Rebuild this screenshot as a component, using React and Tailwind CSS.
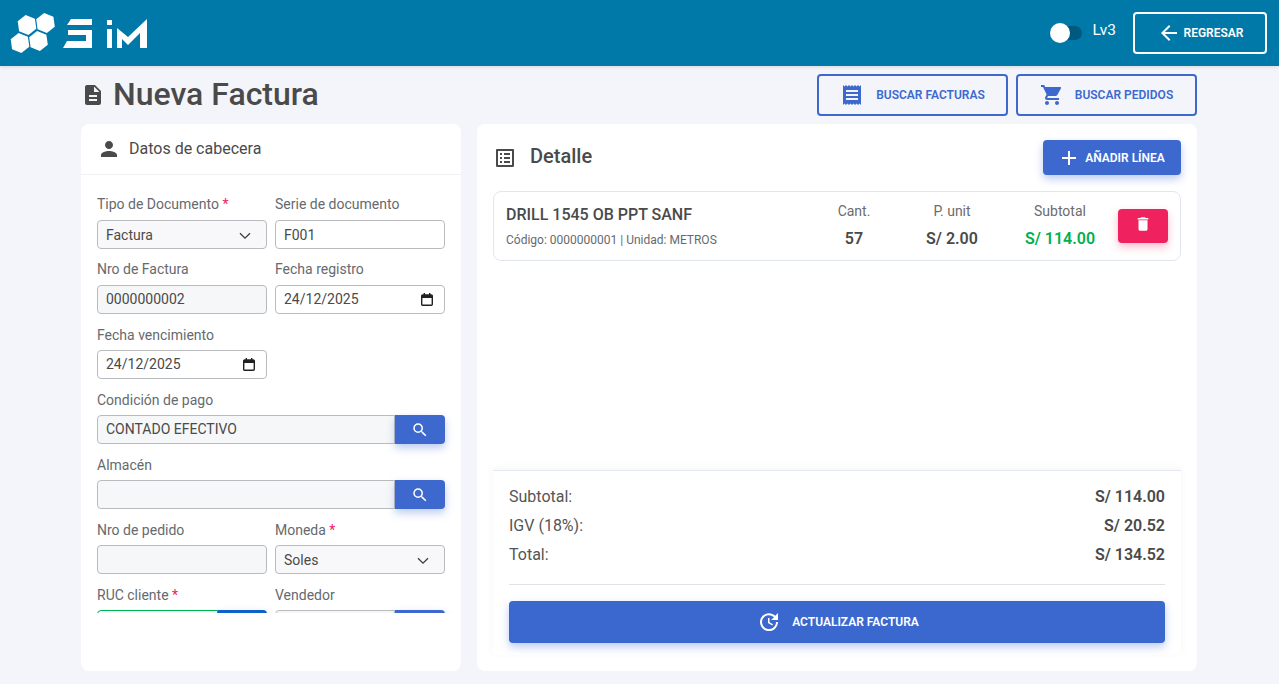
import React from 'react';
import {
  MdAdd,
  MdArrowBack,
  MdDelete,
  MdDescription,
  MdListAlt,
  MdPerson,
  MdReceipt,
  MdSearch,
  MdShoppingCart,
  MdUpdate,
} from 'react-icons/md';

const hexes = [
  [27, 25],
  [45.5, 23],
  [20, 43],
  [38.5, 41],
];

function hexPoints([cx, cy]) {
  return [0, 1, 2, 3, 4, 5]
    .map((i) => {
      const a = ((i * 60 - 8 - 90) * Math.PI) / 180;
      return `${(cx + 10 * Math.cos(a)).toFixed(1)},${(cy + 10 * Math.sin(a)).toFixed(1)}`;
    })
    .join(' ');
}

function Logo() {
  return (
    <svg width="160" height="66" viewBox="0 0 160 66" fill="#fff" aria-label="SIM">
      {hexes.map((h) => (
        <polygon key={h[0]} points={hexPoints(h)} />
      ))}
      <polygon points="71,19 92,19 92,25 67,25" />
      <polygon points="68,30 92,30 92,48 63,48 67,41 86,41 86,35 68,35" />
      <rect x="107" y="20" width="5" height="5" />
      <rect x="107" y="29" width="5" height="19" />
      <polygon points="117,28 128,37 147,19 147,48 140,48 140,33 128,45 122,39 122,48 117,48" />
    </svg>
  );
}

function Chevron() {
  return (
    <svg width="12" height="8" viewBox="0 0 12 8" fill="none" stroke="#3c3c3c" strokeWidth="1.3" className="shrink-0">
      <polyline points="1,1.2 6,6.2 11,1.2" />
    </svg>
  );
}

function CalendarIcon() {
  return (
    <svg width="12" height="13" viewBox="0 0 12 13" fill="none" className="shrink-0">
      <rect x="0.7" y="2" width="10.6" height="10.3" rx="1" stroke="#222" strokeWidth="1.4" />
      <rect x="0.7" y="2" width="10.6" height="3" fill="#222" />
      <rect x="2.6" y="0" width="1.4" height="2" fill="#222" />
      <rect x="8" y="0" width="1.4" height="2" fill="#222" />
    </svg>
  );
}

function Field({ label, required, labelClass = '', children, className }) {
  return (
    <div className={className}>
      <label className={`block h-5 mb-[6px] text-[14px] leading-5 text-[#666a6e] ${labelClass}`}>
        {label}
        {required && <span className="text-[#f0215f]"> *</span>}
      </label>
      {children}
      <div className="h-[10px]" />
    </div>
  );
}

const inputCls =
  'block w-full h-[29px] px-2 text-[14px] text-[#4a4a4a] border border-[#b9bbbf] rounded-[4px] outline-none';

function TextInput({ value, muted }) {
  return <input readOnly value={value} className={`${inputCls} ${muted ? 'bg-[#f6f7f9] pb-px' : 'bg-white'}`} />;
}

function SelectInput({ value }) {
  return (
    <div className={`${inputCls} bg-[#f8f8fa] flex items-center justify-between pr-[15px] pt-[2px]`}>
      <span>{value}</span>
      <Chevron />
    </div>
  );
}

function DateInput({ value }) {
  return (
    <div className={`${inputCls} bg-white flex items-center justify-between pr-[11px]`}>
      <span>{value}</span>
      <CalendarIcon />
    </div>
  );
}

function SearchInput({ value, inputClass = 'border-[#b9bbbf]', btnClass = 'bg-[#3d69cf]', btnWidth = 'w-[50px]' }) {
  return (
    <div className="flex h-[29px]">
      <div className={`flex-1 min-w-0 flex items-center px-2 text-[14px] text-[#4a4a4a] bg-[#f6f7f9] border rounded-l-[4px] ${inputClass}`}>
        {value}
      </div>
      <button className={`${btnWidth} flex items-center justify-center rounded-r-[4px] text-white shadow-[0_4px_8px_rgba(61,105,207,0.35)] ${btnClass}`}>
        <MdSearch size={18} />
      </button>
    </div>
  );
}

function ActionButton({ icon, gap, className, children }) {
  return (
    <button className={`flex items-center justify-center rounded-[4px] text-[12px] font-semibold ${gap} ${className}`}>
      {icon}
      {children}
    </button>
  );
}

function Summary({ label, value, className }) {
  return (
    <div className={`flex items-center justify-between h-[20px] text-[16px] ${className}`}>
      <span className="text-[#555]">{label}</span>
      <span className="font-semibold text-[#4a4a4a]">{value}</span>
    </div>
  );
}

export default function App() {
  return (
    <div className="h-[684px] overflow-hidden bg-[#f3f5fb] text-[#4a4a4a] font-['Roboto',sans-serif]">
      {/* Top bar */}
      <header className="h-[66px] bg-[#0079a9] flex items-center justify-between pr-3 shadow-[0_1px_4px_rgba(0,0,0,0.12)]">
        <Logo />
        <div className="flex items-center">
          <div className="relative w-8 h-[14px] rounded-full bg-[#005a80]">
            <span className="absolute left-0 -top-[3px] w-5 h-5 rounded-full bg-white" />
          </div>
          <span className="ml-[10px] mr-[17px] -mt-1 text-[15.5px] text-white">Lv3</span>
          <ActionButton
            gap="gap-[3px]"
            className="w-[134px] h-[42px] border-2 border-white text-white"
            icon={<MdArrowBack size={24} />}
          >
            REGRESAR
          </ActionButton>
        </div>
      </header>

      <main className="w-[1116px] ml-[81px]">
        {/* Title row */}
        <div className="flex items-center justify-between h-[42px] mt-2">
          <div className="flex items-center gap-2">
            <MdDescription size={24} />
            <h1 className="text-[32px] font-medium leading-none -mt-[2px]">Nueva Factura</h1>
          </div>
          <div className="flex gap-2">
            <ActionButton
              gap="gap-[12px]"
              className="w-[191px] h-[42px] border-2 border-[#3d69cf] text-[#3d69cf]"
              icon={<MdReceipt size={24} />}
            >
              BUSCAR FACTURAS
            </ActionButton>
            <ActionButton
              gap="gap-[11px]"
              className="w-[181px] h-[42px] border-2 border-[#3d69cf] text-[#3d69cf]"
              icon={<MdShoppingCart size={24} />}
            >
              BUSCAR PEDIDOS
            </ActionButton>
          </div>
        </div>

        <div className="flex gap-4 mt-2 h-[547px]">
          {/* Left card */}
          <section className="w-[380px] bg-white rounded-lg flex flex-col">
            <div className="h-[51px] flex items-center gap-2 px-4 border-b border-[#eef0f4]">
              <MdPerson size={24} />
              <h2 className="text-[16px] font-normal">Datos de cabecera</h2>
            </div>
            <div className="h-[438px] overflow-hidden px-4 pt-[19px]">
              <div className="grid grid-cols-2 gap-x-2">
                <Field label="Tipo de Documento" required>
                  <SelectInput value="Factura" />
                </Field>
                <Field label="Serie de documento">
                  <TextInput value="F001" />
                </Field>
                <Field label="Nro de Factura">
                  <TextInput value="0000000002" muted />
                </Field>
                <Field label="Fecha registro">
                  <DateInput value="24/12/2025" />
                </Field>
                <Field label="Fecha vencimiento" labelClass="pt-px">
                  <DateInput value="24/12/2025" />
                </Field>
                <div />
                <Field label="Condición de pago" labelClass="pt-px" className="col-span-2">
                  <SearchInput value="CONTADO EFECTIVO" />
                </Field>
                <Field label="Almacén" labelClass="pt-px" className="col-span-2">
                  <SearchInput value="" />
                </Field>
                <Field label="Nro de pedido" labelClass="pt-px">
                  <TextInput value="" muted />
                </Field>
                <Field label="Moneda" labelClass="pt-px" required>
                  <SelectInput value="Soles" />
                </Field>
                <Field label="RUC cliente" labelClass="pt-px" required>
                  <div className="mt-px">
                    <SearchInput value="" inputClass="border-[#00b050]" btnClass="bg-[#0d62c9]" btnWidth="w-[49px]" />
                  </div>
                </Field>
                <Field label="Vendedor" labelClass="pt-px">
                  <div className="mt-px">
                    <SearchInput value="" />
                  </div>
                </Field>
              </div>
            </div>
          </section>

          {/* Right card */}
          <section className="flex-1 bg-white rounded-lg flex flex-col px-4 pt-4">
            <div className="flex items-center justify-between h-[35px]">
              <div className="flex items-center gap-[13px]">
                <MdListAlt size={24} />
                <h2 className="text-[20px] font-medium -mt-1">Detalle</h2>
              </div>
              <ActionButton
                gap="gap-[4px]"
                className="w-[138px] h-[35px] pr-[2px] bg-[#3d69cf] text-white shadow-[0_4px_8px_rgba(61,105,207,0.35)]"
                icon={<MdAdd size={24} />}
              >
                AÑADIR LÍNEA
              </ActionButton>
            </div>

            <div className="mt-4 h-[70px] flex items-center border border-[#e2e6f0] rounded-lg pl-3 pr-3">
              <div className="flex-1 -mt-px">
                <div className="text-[16px] font-medium">DRILL 1545 OB PPT SANF</div>
                <div className="mt-[4px] text-[12px] text-[#666a6e]">Código: 0000000001 | Unidad: METROS</div>
              </div>
              <div className="w-[96px] text-center">
                <div className="text-[14px] text-[#6c6c6c]">Cant.</div>
                <div className="mt-[5px] text-[16px] font-semibold">57</div>
              </div>
              <div className="w-[100px] text-center">
                <div className="text-[14px] text-[#6c6c6c]">P. unit</div>
                <div className="mt-[5px] text-[16px] font-semibold">S/ 2.00</div>
              </div>
              <div className="w-[116px] text-center">
                <div className="text-[14px] text-[#6c6c6c]">Subtotal</div>
                <div className="mt-[5px] text-[16px] font-semibold text-[#00b050]">S/ 114.00</div>
              </div>
              <button className="w-[50px] h-[34px] rounded-[4px] bg-[#f0215f] text-white flex items-center justify-center shadow-[0_4px_8px_rgba(240,33,95,0.3)]">
                <MdDelete size={18} className="-mt-1" />
              </button>
            </div>

            <div className="mt-[209px] h-[185px] border-t border-[#e4e7f2] px-4 pt-[16px] shadow-[0_-2px_8px_rgba(60,70,120,0.05)]">
              <Summary label="Subtotal:" value="S/ 114.00" />
              <Summary label="IGV (18%):" value="S/ 20.52" className="mt-[9px]" />
              <Summary label="Total:" value="S/ 134.52" className="mt-[9px]" />
              <hr className="mt-[19px] border-[#e0e2e8]" />
              <ActionButton
                gap="gap-[11px]"
                className="w-full h-[42px] mt-4 pl-[2px] bg-[#3b68cf] text-white shadow-[0_4px_8px_rgba(61,105,207,0.35)]"
                icon={<MdUpdate size={24} />}
              >
                ACTUALIZAR FACTURA
              </ActionButton>
            </div>
          </section>
        </div>
      </main>
    </div>
  );
}
